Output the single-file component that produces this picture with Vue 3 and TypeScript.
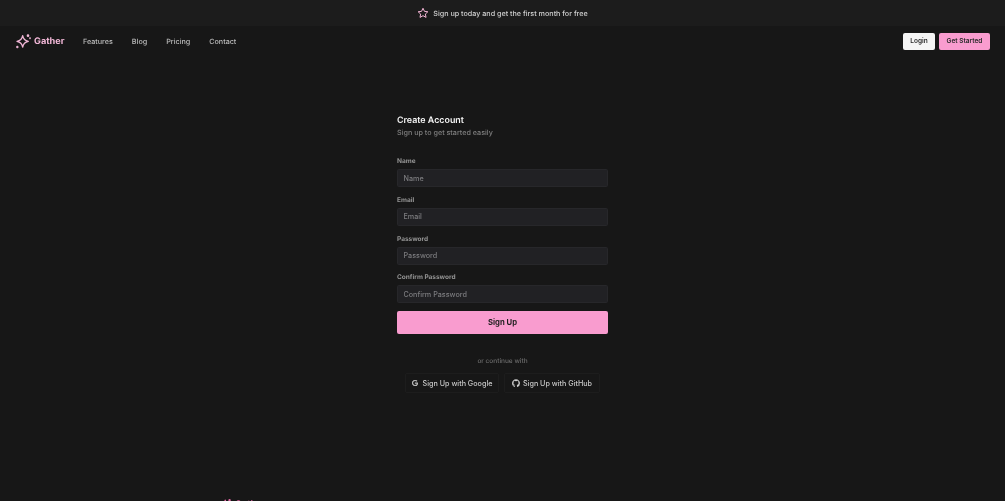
<script setup lang="ts">
const navLinks: string[] = ['Features', 'Blog', 'Pricing', 'Contact'];

interface Field {
  label: string;
  type: string;
}

const fields: Field[] = [
  { label: 'Name', type: 'text' },
  { label: 'Email', type: 'email' },
  { label: 'Password', type: 'password' },
  { label: 'Confirm Password', type: 'password' }
];
</script>

<template>
  <div class="page">
    <div class="banner">
      <svg class="star" viewBox="0 0 24 24" fill="none" stroke="currentColor" stroke-width="2" stroke-linejoin="round">
        <path d="M12 2.5l2.9 6.2 6.8.8-5 4.6 1.4 6.7-6.1-3.4-6 3.4 1.3-6.7-5-4.6 6.8-.8z" />
      </svg>
      <span>Sign up today and get the first month for free</span>
    </div>

    <nav class="nav">
      <a class="brand">
        <svg class="sparkle" viewBox="0 0 24 24" fill="none" stroke="currentColor" stroke-width="2" stroke-linecap="round" stroke-linejoin="round">
          <path d="M11.5 4c.9 5.2 3.2 7.6 8.5 8.5-5.3 1-7.6 3.4-8.5 8.7-.9-5.3-3.2-7.7-8.5-8.7 5.300-.9 7.600-3.300 8.500-8.500z" />
          <circle cx="19.500" cy="4" r="1" />
          <circle cx="22.500" cy="8" r="0.500" />
          <circle cx="3.500" cy="21" r="0.800" />
        </svg>
        <span>Gather</span>
      </a>
      <div class="links">
        <a v-for="link in navLinks" :key="link">{{ link }}</a>
      </div>
      <div class="actions">
        <button class="login">Login</button>
        <button class="started">Get Started</button>
      </div>
    </nav>

    <main class="main">
      <form class="form" @submit.prevent>
        <h1>Create Account</h1>
        <p class="sub">Sign up to get started easily</p>

        <div v-for="field in fields" :key="field.label" class="field">
          <label>{{ field.label }}</label>
          <input :type="field.type" :placeholder="field.label" />
        </div>

        <button class="submit" type="submit">Sign Up</button>

        <p class="divider">or continue with</p>

        <div class="socials">
          <button class="social google" type="button">
            <svg class="g" viewBox="0 0 24 24" fill="currentColor" stroke="currentColor" stroke-width="1.5">
              <path d="M12.48 10.92v3.28h7.84c-.24 1.84-.853 3.187-1.787 4.133-1.147 1.147-2.933 2.4-6.053 2.4-4.827 0-8.6-3.893-8.6-8.72s3.773-8.72 8.6-8.72c2.6 0 4.507 1.027 5.907 2.347l2.307-2.307C18.747 1.44 16.133 0 12.48 0 5.867 0 .307 5.387.307 12s5.56 12 12.173 12c3.573 0 6.267-1.173 8.373-3.36 2.16-2.16 2.84-5.213 2.84-7.667 0-.76-.053-1.467-.173-2.053H12.48z" />
            </svg>
            Sign Up with Google
          </button>
          <button class="social github" type="button">
            <svg class="gh" viewBox="0 0 24 24" fill="currentColor">
              <path d="M12 .5C5.37.5 0 5.87 0 12.5c0 5.3 3.44 9.8 8.2 11.39.6.11.82-.26.82-.58v-2.03c-3.34.73-4.04-1.61-4.04-1.61-.55-1.39-1.34-1.76-1.34-1.76-1.09-.75.08-.73.08-.73 1.2.08 1.84 1.24 1.84 1.24 1.07 1.84 2.81 1.31 3.5 1 .11-.78.42-1.31.76-1.61-2.67-.3-5.47-1.33-5.47-5.93 0-1.31.47-2.38 1.24-3.22-.12-.3-.54-1.52.12-3.18 0 0 1.01-.32 3.3 1.23a11.5 11.5 0 0 1 6 0c2.29-1.55 3.3-1.23 3.3-1.23.66 1.66.24 2.88.12 3.18.77.84 1.24 1.91 1.24 3.22 0 4.61-2.81 5.63-5.48 5.92.43.37.81 1.1.81 2.22v3.29c0 .32.22.7.83.58A12 12 0 0 0 24 12.5C24 5.87 18.63.5 12 .5z" />
            </svg>
            Sign Up with GitHub
          </button>
        </div>
      </form>
    </main>

    <footer class="footer">
      <a class="foot-brand">
        <svg class="foot-sparkle" viewBox="0 0 24 24" fill="none" stroke="currentColor" stroke-width="2.4" stroke-linecap="round" stroke-linejoin="round">
          <path d="M11.5 4c.9 5.2 3.2 7.6 8.5 8.5-5.3 1-7.6 3.4-8.5 8.7-.9-5.3-3.2-7.7-8.5-8.7 5.300-.9 7.600-3.300 8.500-8.500z" />
          <circle cx="19.500" cy="4" r="1" />
        </svg>
        <span>Gather</span>
      </a>
    </footer>
  </div>
</template>

<style>
html,
body {
  margin: 0;
  height: 100%;
  overflow: hidden;
  background: #171717;
}
</style>

<style scoped>
.page {
  height: 501px;
  overflow: hidden;
  background: #171717;
  color: #e5e5e5;
  font-family: Inter, "Liberation Sans", sans-serif;
  text-rendering: geometricPrecision;
  /* reference is a downscaled capture, soft edges and no colour fringe */
  filter: blur(0.3px);
}

.banner {
  height: 26px;
  display: flex;
  align-items: center;
  justify-content: center;
  gap: 4px;
  background: #1c1c1c;
  color: #d0d0d0;
  font-size: 7.2px;
  font-weight: 500;
}

.star {
  width: 12px;
  height: 12px;
  color: #f4b6d6;
}

.nav {
  height: 30px;
  display: flex;
  align-items: center;
  padding: 0 15px;
}

.brand {
  display: flex;
  align-items: center;
  gap: 3px;
  width: 68px;
  color: #f0b6d6;
  font-size: 9.2px;
  font-weight: 700;
}

.sparkle {
  width: 16px;
  height: 16px;
}

.links {
  display: flex;
  gap: 19px;
  color: #bcbcbc;
  font-size: 7.2px;
  font-weight: 500;
}

.actions {
  margin-left: auto;
  display: flex;
  gap: 4px;
}

.actions button {
  height: 17px;
  padding: 0;
  border: none;
  border-radius: 2px;
  color: #2a2a2a;
  font-family: inherit;
  font-size: 6.5px;
  font-weight: 600;
}

.login {
  width: 32px;
  background: #f5f5f5;
}

.started {
  width: 51px;
  background: #f99ccf;
}

.main {
  height: 442px;
}

.form {
  width: 211px;
  margin: 0 auto;
  padding-top: 58px;
}

h1 {
  margin: 0;
  color: #f5f5f5;
  font-size: 8.9px;
  font-weight: 600;
  line-height: 13px;
}

.sub {
  margin: 0 0 18px;
  color: #7f7f7f;
  font-size: 7.2px;
  font-weight: 500;
  line-height: 11px;
}

.field {
  display: flex;
  flex-direction: column;
  gap: 3px;
  margin-bottom: 7.8px;
}

label {
  color: #949494;
  font-size: 6.5px;
  font-weight: 700;
  line-height: 10px;
}

input {
  box-sizing: border-box;
  height: 18px;
  padding: 0 5.5px;
  border: 1px solid #27272a;
  border-radius: 1.5px;
  background: #212124;
  color: #e5e5e5;
  font-family: inherit;
  font-size: 7.2px;
  font-weight: 500;
  outline: none;
}

input::placeholder {
  color: #7c7c7f;
}

.submit {
  display: block;
  width: 100%;
  height: 22.5px;
  padding: 0;
  border: none;
  border-radius: 2px;
  background: #f99ccf;
  color: #1f1f1f;
  font-family: inherit;
  font-size: 7.7px;
  font-weight: 700;
}

.divider {
  margin: 22px 0 7.5px;
  color: #6c6c6c;
  font-size: 6.5px;
  font-weight: 500;
  line-height: 10px;
  text-align: center;
}

.socials {
  display: flex;
  justify-content: center;
  gap: 5px;
}

.social {
  display: flex;
  flex: none;
  align-items: center;
  justify-content: center;
  height: 20px;
  padding: 0;
  border: 1px solid #1d1d1d;
  border-radius: 2px;
  background: transparent;
  color: #cacaca;
  font-family: inherit;
  font-size: 7.2px;
  font-weight: 500;
  white-space: nowrap;
}

.google {
  width: 94px;
}

.github {
  width: 96px;
}

.g {
  width: 6px;
  height: 6px;
  margin-right: 5px;
}

.gh {
  width: 8px;
  height: 8px;
  margin-right: 3px;
}

.footer {
  padding-left: 219px;
}

.foot-brand {
  display: flex;
  align-items: center;
  gap: 3px;
  color: #e76aa8;
  font-size: 9.2px;
  font-weight: 700;
}

.foot-sparkle {
  width: 13px;
  height: 13px;
}
</style>
